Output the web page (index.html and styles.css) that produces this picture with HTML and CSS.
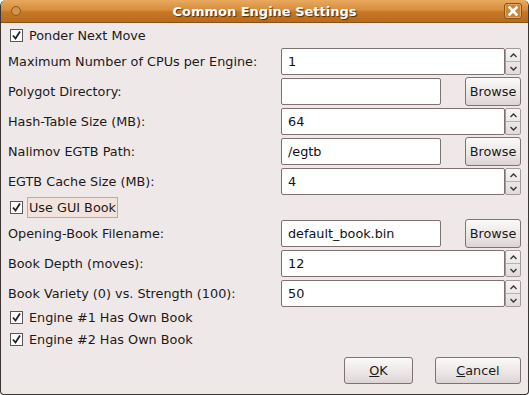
FILE: index.html
```html
<!DOCTYPE html>
<html lang="en">
<head>
    <meta charset="UTF-8">
    <title>Common Engine Settings</title>
    <link rel="stylesheet" href="styles.css">
</head>
<body>
    <div class="window">
        <div class="titlebar">
            <span class="title-icon"></span>
            <span class="title">Common Engine Settings</span>
            <span class="close-btn">
                <svg width="10" height="10" viewBox="0 0 10 10"><path d="M1.5 1.5 L8.5 8.5 M8.5 1.5 L1.5 8.5" stroke="#fff" stroke-width="2.6" stroke-linecap="square"/></svg>
            </span>
        </div>
        <div class="content">
            <div class="check-row"><span class="checkbox"><svg width="11" height="11" viewBox="0 0 11 11"><path d="M2 5.5 L4.5 8.5 L9 1.5" fill="none" stroke="#222" stroke-width="1.8"/></svg></span><span>Ponder Next Move</span></div>

            <div class="field-row">
                <label>Maximum Number of CPUs per Engine:</label>
                <div class="spin"><span class="entry">1</span><span class="spin-btns"><span><svg width="7" height="5" viewBox="0 0 7 5"><path d="M0.5 4 L3.5 1 L6.5 4" fill="none" stroke="#333" stroke-width="1.3"/></svg></span><span><svg width="7" height="5" viewBox="0 0 7 5"><path d="M0.5 1 L3.5 4 L6.5 1" fill="none" stroke="#333" stroke-width="1.3"/></svg></span></span></div>
            </div>
            <div class="field-row">
                <label>Polygot Directory:</label>
                <div class="file"><span class="entry"></span><span class="button">Browse</span></div>
            </div>
            <div class="field-row">
                <label>Hash-Table Size (MB):</label>
                <div class="spin"><span class="entry">64</span><span class="spin-btns"><span><svg width="7" height="5" viewBox="0 0 7 5"><path d="M0.5 4 L3.5 1 L6.5 4" fill="none" stroke="#333" stroke-width="1.3"/></svg></span><span><svg width="7" height="5" viewBox="0 0 7 5"><path d="M0.5 1 L3.5 4 L6.5 1" fill="none" stroke="#333" stroke-width="1.3"/></svg></span></span></div>
            </div>
            <div class="field-row">
                <label>Nalimov EGTB Path:</label>
                <div class="file"><span class="entry">/egtb</span><span class="button">Browse</span></div>
            </div>
            <div class="field-row">
                <label>EGTB Cache Size (MB):</label>
                <div class="spin"><span class="entry">4</span><span class="spin-btns"><span><svg width="7" height="5" viewBox="0 0 7 5"><path d="M0.5 4 L3.5 1 L6.5 4" fill="none" stroke="#333" stroke-width="1.3"/></svg></span><span><svg width="7" height="5" viewBox="0 0 7 5"><path d="M0.5 1 L3.5 4 L6.5 1" fill="none" stroke="#333" stroke-width="1.3"/></svg></span></span></div>
            </div>

            <div class="check-row"><span class="checkbox"><svg width="11" height="11" viewBox="0 0 11 11"><path d="M2 5.5 L4.5 8.5 L9 1.5" fill="none" stroke="#222" stroke-width="1.8"/></svg></span><span class="focus">Use GUI Book</span></div>

            <div class="field-row">
                <label>Opening-Book Filename:</label>
                <div class="file"><span class="entry">default_book.bin</span><span class="button">Browse</span></div>
            </div>
            <div class="field-row">
                <label>Book Depth (moves):</label>
                <div class="spin"><span class="entry">12</span><span class="spin-btns"><span><svg width="7" height="5" viewBox="0 0 7 5"><path d="M0.5 4 L3.5 1 L6.5 4" fill="none" stroke="#333" stroke-width="1.3"/></svg></span><span><svg width="7" height="5" viewBox="0 0 7 5"><path d="M0.5 1 L3.5 4 L6.5 1" fill="none" stroke="#333" stroke-width="1.3"/></svg></span></span></div>
            </div>
            <div class="field-row">
                <label>Book Variety (0) vs. Strength (100):</label>
                <div class="spin"><span class="entry">50</span><span class="spin-btns"><span><svg width="7" height="5" viewBox="0 0 7 5"><path d="M0.5 4 L3.5 1 L6.5 4" fill="none" stroke="#333" stroke-width="1.3"/></svg></span><span><svg width="7" height="5" viewBox="0 0 7 5"><path d="M0.5 1 L3.5 4 L6.5 1" fill="none" stroke="#333" stroke-width="1.3"/></svg></span></span></div>
            </div>

            <div class="check-row engines"><span class="checkbox"><svg width="11" height="11" viewBox="0 0 11 11"><path d="M2 5.5 L4.5 8.5 L9 1.5" fill="none" stroke="#222" stroke-width="1.8"/></svg></span><span>Engine #1 Has Own Book</span></div>
            <div class="check-row"><span class="checkbox"><svg width="11" height="11" viewBox="0 0 11 11"><path d="M2 5.5 L4.5 8.5 L9 1.5" fill="none" stroke="#222" stroke-width="1.8"/></svg></span><span>Engine #2 Has Own Book</span></div>

            <div class="actions">
                <span class="button action"><u>O</u>K</span>
                <span class="button action"><u>C</u>ancel</span>
            </div>
        </div>
    </div>
</body>
</html>
```

FILE: styles.css
```css
body {
    margin: 0;
    font-family: "DejaVu Sans", sans-serif;
    font-size: 12.8px;
    color: #1a1a1a;
    background-color: #ffffff;
}
.window {
    width: 529px;
    height: 395px;
    box-sizing: border-box;
    background-color: #efe8e8;
    border: 1px solid #3b3633;
    border-top: none;
    border-radius: 6px 6px 4px 4px;
    overflow: hidden;
}
.titlebar {
    height: 23px;
    display: grid;
    grid-template-columns: 1fr auto 1fr;
    align-items: center;
    background: linear-gradient(#e8a95e, #d88d3b 45%, #c57826 55%, #b86b1c);
    border-bottom: 1px solid #8a5416;
    box-sizing: border-box;
}
.title-icon {
    width: 8px;
    height: 8px;
    margin-left: 10px;
    border-radius: 50%;
    border: 1px solid #8c5a1f;
    background: #d4934a;
}
.title {
    color: #fff;
    font-weight: bold;
    font-size: 13px;
    text-shadow: 1px 1px 1px #4f2c06;
}
.close-btn {
    justify-self: end;
    width: 18px;
    height: 16px;
    margin-right: 6px;
    display: flex;
    align-items: center;
    justify-content: center;
    border: 1px solid #8a5418;
    box-shadow: inset 0 0 0 1px #dfa768;
    border-radius: 3px;
    background: #cc8538;
    box-sizing: border-box;
}
.content {
    padding: 1px 7px 0 7px;
}
.check-row {
    display: flex;
    align-items: center;
    height: 22px;
}
.check-row.engines {
    margin-top: -2px;
}
.checkbox {
    width: 11px;
    height: 11px;
    margin: 0 6px 0 2px;
    border: 1px solid #5e5656;
    background: #fff;
    display: flex;
}
.focus {
    border: 1px solid #e0a36a;
    background: #f2e4dc;
    padding: 2px 1px;
    margin-left: -2px;
}
.field-row {
    display: flex;
    align-items: flex-start;
    height: 30px;
    box-sizing: border-box;
    padding-top: 2px;
}
.field-row label {
    width: 273px;
    flex: none;
    align-self: center;
    margin-top: -1px;
}
.spin, .file {
    display: flex;
    flex: none;
    width: 240px;
    height: 27px;
}
.entry {
    flex: 1;
    height: 27px;
    box-sizing: border-box;
    border: 1px solid #7f7072;
    border-radius: 2px;
    background: #fff;
    padding: 0 6px;
    display: flex;
    align-items: center;
    color: #111;
}
.file .entry {
    flex: none;
    width: 160px;
    margin-right: 24px;
}
.spin-btns {
    width: 16px;
    display: flex;
    flex-direction: column;
    border: 1px solid #a59a9a;
    border-radius: 2px;
    box-sizing: border-box;
    background: linear-gradient(#f8f5f5, #e2dbdb);
}
.spin-btns span {
    flex: 1;
    display: flex;
    align-items: center;
    justify-content: center;
}
.spin-btns span + span {
    border-top: 1px solid #b9afaf;
}
.button {
    display: flex;
    align-items: center;
    justify-content: center;
    box-sizing: border-box;
    border: 1px solid #7f7273;
    border-radius: 3px;
    background: linear-gradient(#fbf9f9, #ebe5e5 60%, #ddd5d5);
    color: #1a1a1a;
}
.file .button {
    width: 56px;
    height: 29px;
    margin-top: -1px;
}
.actions {
    display: flex;
    justify-content: flex-end;
    gap: 22px;
    margin-top: 7px;
}
.action {
    width: 69px;
    height: 27px;
}
.action:last-child {
    width: 86px;
}
```
